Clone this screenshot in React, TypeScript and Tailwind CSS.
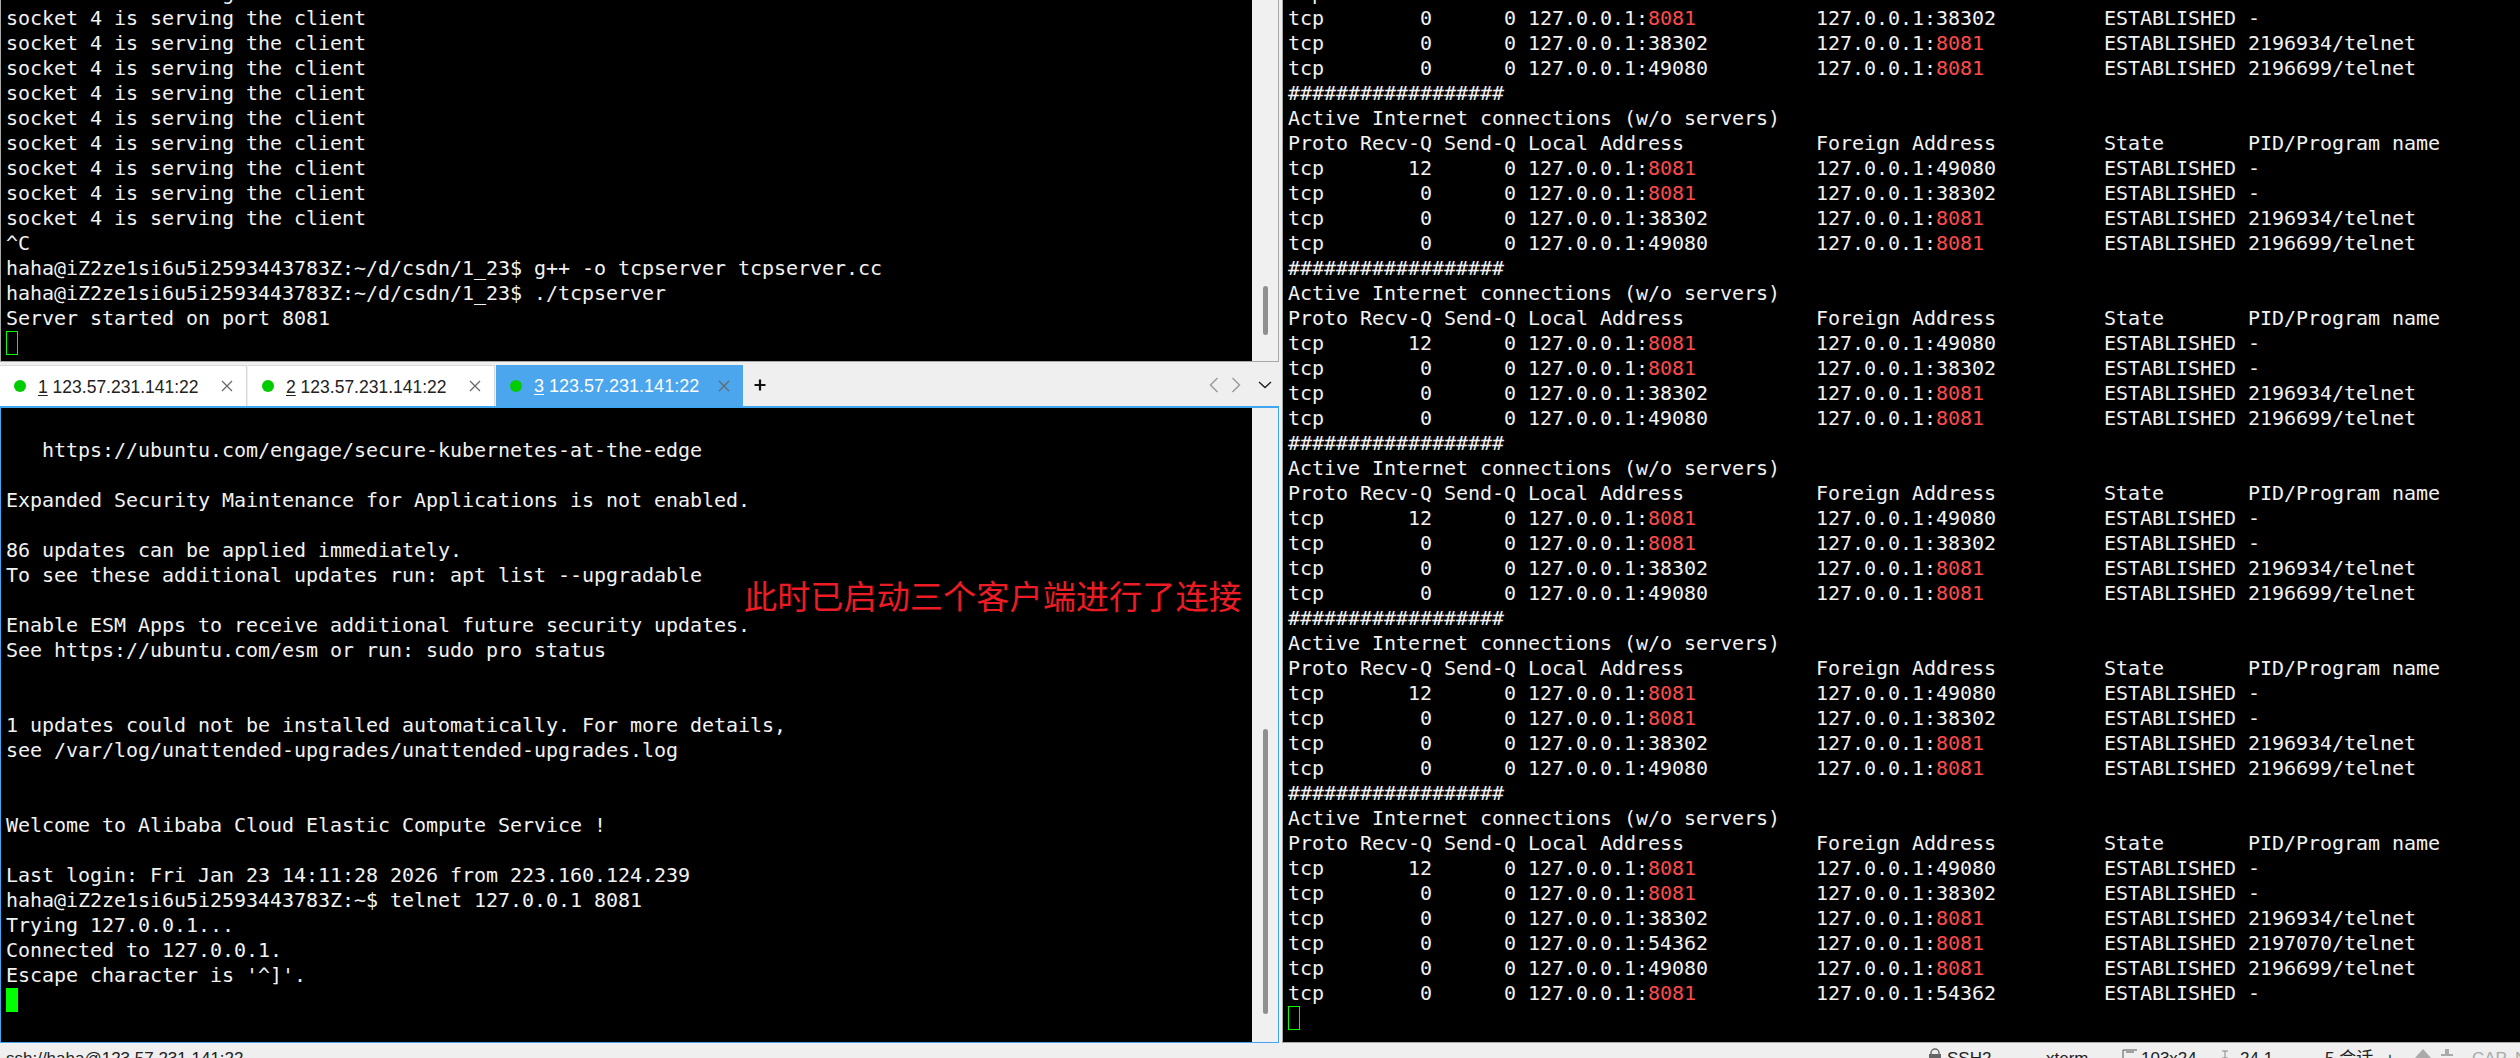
import React from "react";

const MONO = "font-['DejaVu_Sans_Mono','Liberation_Mono',monospace] text-[20px] leading-[25px] tracking-[-0.04px] text-[#f2f2f2] whitespace-pre";
const UI = "font-['Liberation_Sans','Noto_Sans_CJK_SC',sans-serif]";

const SOCKET = "socket 4 is serving the client";
const PROMPT = "haha@iZ2ze1si6u5i2593443783Z:";

const topLines = [
  ...Array(10).fill(SOCKET),
  "^C",
  PROMPT + "~/d/csdn/1_23$ g++ -o tcpserver tcpserver.cc",
  PROMPT + "~/d/csdn/1_23$ ./tcpserver",
  "Server started on port 8081",
];

const bottomLines = [
  " ",
  "   https://ubuntu.com/engage/secure-kubernetes-at-the-edge",
  " ",
  "Expanded Security Maintenance for Applications is not enabled.",
  " ",
  "86 updates can be applied immediately.",
  "To see these additional updates run: apt list --upgradable",
  " ",
  "Enable ESM Apps to receive additional future security updates.",
  "See https://ubuntu.com/esm or run: sudo pro status",
  " ",
  " ",
  "1 updates could not be installed automatically. For more details,",
  "see /var/log/unattended-upgrades/unattended-upgrades.log",
  " ",
  " ",
  "Welcome to Alibaba Cloud Elastic Compute Service !",
  " ",
  "Last login: Fri Jan 23 14:11:28 2026 from 223.160.124.239",
  PROMPT + "~$ telnet 127.0.0.1 8081",
  "Trying 127.0.0.1...",
  "Connected to 127.0.0.1.",
  "Escape character is '^]'.",
];

const row = (recv: string, local: string, foreign: string, prog: string) =>
  "tcp".padEnd(5) + " " + recv.padStart(6) + " " + "0".padStart(6) + " " +
  ("127.0.0.1:" + local).padEnd(23) + " " + ("127.0.0.1:" + foreign).padEnd(23) + " " +
  "ESTABLISHED " + prog;

const HEAD = [
  "##################",
  "Active Internet connections (w/o servers)",
  "Proto Recv-Q Send-Q Local Address           Foreign Address         State       PID/Program name",
];
const A = row("12", "8081", "49080", "-");
const B = row("0", "8081", "38302", "-");
const C = row("0", "38302", "8081", "2196934/telnet");
const D = row("0", "49080", "8081", "2196699/telnet");
const block = [...HEAD, A, B, C, D];

const rightLines = [
  A, B, C, D,
  ...block, ...block, ...block, ...block,
  ...HEAD,
  A, B, C,
  row("0", "54362", "8081", "2197070/telnet"),
  D,
  row("0", "8081", "54362", "-"),
];

function Line({ text, red }: { text: string; red?: boolean }) {
  if (!red) return <div className="h-[25px] shrink-0">{text}</div>;
  const parts = text.split(/(8081)/);
  return (
    <div className="h-[25px] shrink-0">
      {parts.map((p, i) =>
        p === "8081" ? (
          <span key={i} className="text-[#ff4a4a]">{p}</span>
        ) : (
          <span key={i}>{p}</span>
        )
      )}
    </div>
  );
}

function Terminal({
  lines,
  red,
  cursor,
  className,
}: {
  lines: string[];
  red?: boolean;
  cursor: React.ReactNode;
  className: string;
}) {
  return (
    <div className={`flex flex-col justify-end overflow-hidden bg-black min-w-0 ${MONO} ${className}`}>
      {lines.map((t, i) => (
        <Line key={i} text={t} red={red} />
      ))}
      <div className="h-[25px] shrink-0">{cursor}</div>
    </div>
  );
}

function Track({ thumb }: { thumb: string }) {
  return (
    <div className="w-[26px] shrink-0 bg-[#f0f0f0]">
      <div className={`ml-[11px] w-[5px] rounded-full bg-[#8f8f8f] ${thumb}`} />
    </div>
  );
}

function Tab({ n, active, className }: { n: number; active?: boolean; className: string }) {
  return (
    <div
      className={`flex h-[41px] items-center ${UI} ${
        active ? "bg-[#4ba6ee] text-[18px] text-white" : "border-t border-r border-[#d8d8d8] bg-white text-[17.5px] text-[#222]"
      } ${className}`}
    >
      <span className="ml-[14px] h-[12px] w-[12px] shrink-0 rounded-full bg-[#00cc00]" />
      <span className="ml-[12px] mt-[2px]">
        <span className="underline underline-offset-2">{n}</span> 123.57.231.141:22
      </span>
      <svg width="12" height="12" viewBox="0 0 12 12" className="ml-auto mr-[13px] shrink-0" fill="none" stroke="#666" strokeWidth="1.2">
        <path d="M1 1l10 10M11 1L1 11" />
      </svg>
    </div>
  );
}

function TabBar() {
  return (
    <div className="flex h-[44px] shrink-0 items-start bg-[#efefef] pt-[3px]">
      <Tab n={1} className="w-[247px] mr-[1px]" />
      <Tab n={2} className="w-[247px] mr-[1px]" />
      <Tab n={3} active className="w-[247px]" />
      <svg width="14" height="14" viewBox="0 0 14 14" className="ml-[10px] mt-[13px]" stroke="#111" strokeWidth="2.2">
        <path d="M7 1.5v11M1.5 7h11" />
      </svg>
      <svg width="10" height="16" viewBox="0 0 10 16" className="ml-auto mt-[12px]" fill="none" stroke="#999" strokeWidth="1.4">
        <path d="M8.5 1L1.5 8l7 7" />
      </svg>
      <svg width="10" height="16" viewBox="0 0 10 16" className="ml-[12px] mt-[12px]" fill="none" stroke="#999" strokeWidth="1.4">
        <path d="M1.5 1l7 7-7 7" />
      </svg>
      <svg width="14" height="8" viewBox="0 0 14 8" className="ml-[17px] mr-[7px] mt-[16px]" fill="none" stroke="#222" strokeWidth="1.4">
        <path d="M1 1l6 5.5L13 1" />
      </svg>
    </div>
  );
}

function StatusBar() {
  return (
    <div className={`flex h-[15px] shrink-0 items-start overflow-hidden bg-[#efefef] pt-[6px] text-[17px] leading-[20px] text-[#222] ${UI}`}>
      <div className="flex-1 pl-[6px]">ssh://haha@123.57.231.141:22</div>
      <div className="flex w-[118px] shrink-0">
        <svg width="14" height="18" viewBox="0 0 14 18" className="mr-[5px] mt-[-1px]">
          <path d="M3 7V5a4 4 0 018 0v2" fill="none" stroke="#666" strokeWidth="1.4" />
          <rect x="1" y="6" width="12" height="11" fill="#666" />
        </svg>
        SSH2
      </div>
      <div className="w-[76px] shrink-0">xterm</div>
      <div className="flex w-[99px] shrink-0">
        <svg width="16" height="18" viewBox="0 0 16 18" className="mr-[3px]" fill="none" stroke="#555" strokeWidth="1">
          <path d="M1 1h14M1 1v16M4 3h8" />
        </svg>
        103x24
      </div>
      <div className="flex w-[104px] shrink-0">
        <svg width="9" height="18" viewBox="0 0 9 18" className="mr-[10px] mt-[1px]" fill="none" stroke="#888" strokeWidth="1">
          <path d="M1 1h6M4 1v16M1 8h6" />
        </svg>
        24,1
      </div>
      <div className="w-[60px] shrink-0">5 会话</div>
      <div className="w-[30px] shrink-0">+</div>
      <div className="flex w-[57px] shrink-0">
        <svg width="16" height="12" viewBox="0 0 16 12" className="mr-[10px]">
          <path d="M8 0l8 9H0z" fill="#aaa" />
        </svg>
        <svg width="12" height="12" viewBox="0 0 12 12">
          <path d="M4 0h4v5h4v2H0V5h4z" fill="#aaa" />
        </svg>
      </div>
      <div className="w-[43px] shrink-0 text-[#aaa]">CAP</div>
      <div className="w-[5px] shrink-0 overflow-hidden text-[#aaa]">NUM</div>
    </div>
  );
}

export default function App() {
  return (
    <div className="flex h-[1058px] w-[2520px] flex-col overflow-hidden bg-[#efefef]">
      <div className="flex h-[1043px] shrink-0">
        <div className="flex w-[1279px] shrink-0 flex-col">
          <div className="flex h-[362px] shrink-0 border-b border-l border-r border-[#a8a8a8]">
            <Terminal
              lines={topLines}
              className="flex-1 pl-[5px] pb-[5px]"
              cursor={<div className="h-[24px] w-[12px] border border-[#00ff00]" />}
            />
            <Track thumb="mt-[286px] h-[49px]" />
          </div>
          <TabBar />
          <div className="relative flex min-h-0 flex-1 border-x border-b border-t-2 border-[#42a5f0]">
            <Terminal
              lines={bottomLines}
              className="flex-1 pl-[5px] pb-[29px]"
              cursor={<div className="h-[24px] w-[12px] bg-[#00ff00]" />}
            />
            <Track thumb="mt-[321px] h-[285px]" />
            <div className="absolute left-[743px] top-[167px] font-['Noto_Sans_CJK_SC',sans-serif] text-[33.2px] leading-[40px] font-normal whitespace-nowrap text-[#ed1c24]">
              此时已启动三个客户端进行了连接
            </div>
          </div>
        </div>
        <div className="ml-[3px] flex min-w-0 flex-1 border-b border-l border-[#a8a8a8]">
          <Terminal
            lines={rightLines}
            red
            className="flex-1 pl-[5px] pb-[11px]"
            cursor={<div className="h-[24px] w-[12px] border border-[#00ff00]" />}
          />
        </div>
      </div>
      <StatusBar />
    </div>
  );
}
